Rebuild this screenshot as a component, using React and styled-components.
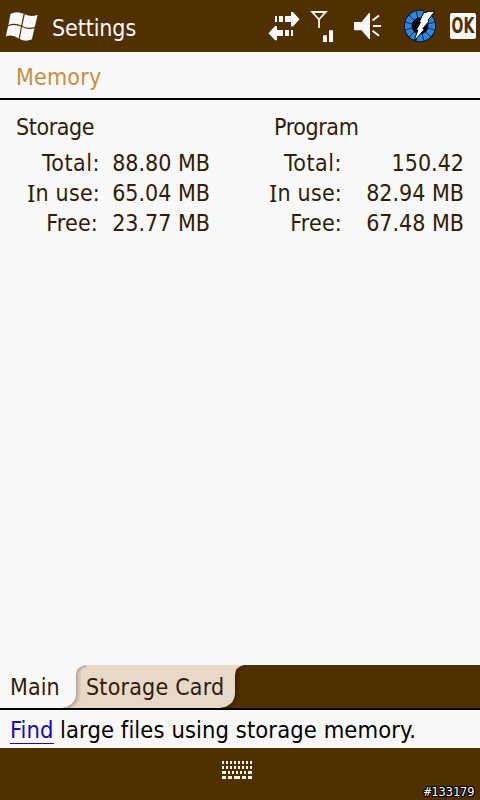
import React from "react";
import styled, { createGlobalStyle } from "styled-components";

const BROWN = "#503000";
const PAPER = "#f8f8f8";
const INK = "#301c08";

const GlobalStyle = createGlobalStyle`
  * { box-sizing: border-box; }
  body { margin: 0; background: ${PAPER}; }
`;

const Screen = styled.div`
  width: 480px;
  height: 800px;
  display: flex;
  flex-direction: column;
  overflow: hidden;
  background: ${PAPER};
  color: ${INK};
  font: 23px/30px "DejaVu Sans Condensed", "DejaVu Sans", sans-serif;
  font-stretch: condensed;
  white-space: pre;
`;

const TopBar = styled.header`
  height: 52px;
  flex: none;
  display: flex;
  align-items: flex-start;
  background: ${BROWN};
  color: ${PAPER};
`;

const BarTitle = styled.h1`
  margin: 13px 0 0 11px;
  width: 216px;
  font-size: 23px;
  font-weight: 400;
  letter-spacing: -0.1px;
`;

const Icon = styled.svg`
  flex: none;
  display: block;
`;

const OkButton = styled.button`
  width: 26px;
  height: 26px;
  flex: none;
  margin: 13px 0 0;
  padding: 0;
  display: flex;
  justify-content: center;
  border: 0;
  border-radius: 2px;
  background: ${PAPER};
  color: ${BROWN};
  font: 700 20.5px/27px "DejaVu Sans Condensed", "DejaVu Sans", sans-serif;
  font-stretch: condensed;
`;

const OkText = styled.span`
  flex: none;
  transform: scaleX(0.76);
`;

const PageTitle = styled.h2`
  height: 48px;
  flex: none;
  margin: 0;
  padding: 10px 0 0 16px;
  border-bottom: 2px solid #000;
  color: #c68e40;
  font-size: 23px;
  font-weight: 400;
  letter-spacing: 0.2px;
`;

const Content = styled.main`
  flex: 1;
  display: flex;
  padding-top: 12px;
`;

const Column = styled.section`
  width: ${(p) => p.$width}px;
`;

const GroupName = styled.h3`
  margin: 0 0 6px;
  padding-left: 16px;
  font-size: 23px;
  font-weight: 400;
  letter-spacing: -0.4px;
`;

const Row = styled.div`
  height: 30px;
  display: flex;
`;

const Label = styled.span`
  width: ${(p) => p.$width}px;
  padding-right: ${(p) => p.$inset || 0}px;
  display: flex;
  justify-content: flex-end;
  letter-spacing: ${(p) => p.$spacing || 0.2}px;
`;

const SerifI = styled.span`
  font-family: "Noto Sans", sans-serif;
  font-size: 23.5px;
`;

const Value = styled.span`
  width: ${(p) => p.$width}px;
  text-align: right;
`;

const TabBar = styled.nav`
  height: 45px;
  flex: none;
  display: flex;
  background: ${BROWN};
  border-bottom: 2px solid #000;
`;

const Tab = styled.span`
  width: ${(p) => p.$width}px;
  padding: 7px 0 0 ${(p) => p.$left}px;
  background: ${(p) => (p.$active ? PAPER : "#e8d8c8")};
  letter-spacing: ${(p) => p.$spacing}px;
`;

/* The label is wider than the flat part of its tab and runs over the edge. */
const TabLabel = styled.span`
  display: block;
  margin-left: -1px;
  position: relative;
`;

const Hint = styled.p`
  height: 38px;
  flex: none;
  margin: 0;
  padding: 5px 0 0 10px;
  display: flex;
  background: ${PAPER};
  color: #000;
  font-size: 23.5px;
  letter-spacing: 0.1px;
`;

const FindLink = styled.a`
  width: 44px;
  height: 29px;
  margin-right: 6px;
  border-bottom: 1px solid #1808b8;
  color: #1808b8;
`;

const BottomBar = styled.footer`
  height: 52px;
  flex: none;
  display: flex;
  background: ${BROWN};
`;

const Keyboard = styled(Icon)`
  margin: 13px 172px 0 222px;
`;

const Stamp = styled.span`
  align-self: flex-end;
  height: 15px;
  color: #fff;
  font: 12px/14px "DejaVu Sans Mono", monospace;
  text-shadow: 1px 0 #000, -1px 0 #000, 0 1px #000, 0 -1px #000, 1px 1px #000, -1px -1px #000, 1px -1px #000, -1px 1px #000;
`;

const WindowsLogo = () => (
  <Icon width="41" height="52" viewBox="0 0 41 52" fill={PAPER}>
    <path d="M10.5 14Q16 10.5 23.6 13.7L21.2 25.3Q14.5 22.2 8.4 25Z" />
    <path d="M24.8 14.2Q31 17.5 37.6 14.8L34.8 27Q28 29 22.3 25.9Z" />
    <path d="M8.1 26.2Q14.5 23.6 21 26.6L18.7 38.5Q12 33.5 5.8 36.5Z" />
    <path d="M22 27.1Q28 30.2 34.5 28.3L31.8 39.5Q25 42 19.8 39Z" />
  </Icon>
);

const ConnectionIcon = () => (
  <Icon width="42" height="52" viewBox="268 0 42 52" fill={PAPER}>
    <path d="M275 16h2v6h-2zM279 16h4v6h-4zM285 16h6v-4h2l6.5 7.3-6.5 7.2h-2V22h-6z" />
    <path d="M291 30h2v6h-2zM285 30h4v6h-4zM283 30h-6v-4h-2l-6.5 7.2 6.5 7.1h2V36h6z" />
  </Icon>
);

const SignalIcon = () => (
  <Icon width="43" height="52" viewBox="310 0 43 52" fill={PAPER}>
    <path d="M312.2 12h13.6L319 19.5zM319 18v10" fill="none" stroke={PAPER} strokeWidth="1.8" />
    <path d="M323 36l1-1h2l1 1v6h-4zM329 31l1-1h2l1 1v11h-4z" />
  </Icon>
);

const SpeakerIcon = () => (
  <Icon width="50" height="52" viewBox="353 0 50 52" fill={PAPER}>
    <path d="M354 22h7.5l7.5-9h1v26h-1l-7.5-8.7H354z" />
    <path d="M372.5 20.5l6.5-5M373 26h8M372.5 30.8l6.5 5" fill="none" stroke={PAPER} strokeWidth="2" />
  </Icon>
);

const SEGMENTS = Array.from({ length: 12 }, (_, i) => i * 30);

const PowerIcon = () => (
  <Icon width="47" height="52" viewBox="403 0 47 52">
    <circle cx="420" cy="26" r="16" fill="#05080c" />
    <circle cx="420" cy="26" r="11.8" fill="none" stroke="#2f84dc" strokeWidth="6.8" />
    {SEGMENTS.map((a) => (
      <path key={a} d="M420 18V10" stroke="#0c2c58" strokeWidth="0.9" transform={`rotate(${a + 15} 420 26)`} />
    ))}
    <path d="M423.5 13Q428 10.8 434.8 11.3L428 20.3 429.2 21 422.8 28.5 424.2 29.5 414 41.3 417.8 30.2 416.6 29.2 420.4 22.4 419.6 21.2Z" fill="#fff" stroke="#05080c" strokeWidth="1" />
  </Icon>
);

const TabEdge = ({ left, right, shade }) => (
  <Icon width="26" height="43" viewBox="0 0 26 43">
    <rect width="26" height="43" fill={right} />
    <path d="M25 0Q17 2 17 10V29Q17 41 2 43" fill="none" stroke={shade} strokeWidth="5" opacity="0.3" />
    <path d="M25 0Q16 2 16 10V29Q16 41 2 43" fill="none" stroke={shade} strokeWidth="2" opacity="0.55" />
    <path d="M0 0H24Q15 2 15 10V29Q14 41 0 43Z" fill={left} />
  </Icon>
);

const KEYS = [
  [0, [0, 4, 8, 12, 16, 20, 24, 28].map((x) => [x, 2])],
  [5, [0, 4, 8, 12, 16, 20, 24, 28].map((x) => [x, 2])],
  [10, [[0, 4], [6, 2], [10, 2], [14, 2], [18, 2], [22, 2], [26, 4]]],
  [15, [[0, 4], [6, 4], [12, 6], [20, 4], [26, 4]]],
];

const KeyboardIcon = () => (
  <Keyboard width="30" height="20" viewBox="0 0 30 20" fill="#fffbe8">
    {KEYS.map(([y, keys]) =>
      keys.map(([x, w]) => <rect key={`${x}-${y}`} x={x} y={y} width={w} height="3" />)
    )}
  </Keyboard>
);

const InUse = () => (
  <>
    <SerifI>I</SerifI>n use:
  </>
);

export default function App() {
  return (
    <>
      <GlobalStyle />
      <Screen>
        <TopBar>
          <WindowsLogo />
          <BarTitle>Settings</BarTitle>
          <ConnectionIcon />
          <SignalIcon />
          <SpeakerIcon />
          <PowerIcon />
          <OkButton><OkText>OK</OkText></OkButton>
        </TopBar>
        <PageTitle>Memory</PageTitle>
        <Content>
          <Column $width={258}>
            <GroupName>Storage</GroupName>
            <Row><Label $width={100} $spacing={0.5}>Total:</Label><Value $width={110}>88.80 MB</Value></Row>
            <Row><Label $width={100}><InUse /></Label><Value $width={110}>65.04 MB</Value></Row>
            <Row><Label $width={100} $inset={2}>Free:</Label><Value $width={110}>23.77 MB</Value></Row>
          </Column>
          <Column $width={222}>
            <GroupName>Program</GroupName>
            <Row><Label $width={84} $spacing={0.5}>Total:</Label><Value $width={122}>150.42</Value></Row>
            <Row><Label $width={84}><InUse /></Label><Value $width={122}>82.94 MB</Value></Row>
            <Row><Label $width={84}>Free:</Label><Value $width={122}>67.48 MB</Value></Row>
          </Column>
        </Content>
        <TabBar>
          <Tab $active $width={61} $left={10} $spacing={0.1}>Main</Tab>
          <TabEdge left={PAPER} right="#e8d8c8" shade="#a89888" />
          <Tab $width={133} $left={0} $spacing={0.2}>
            <TabLabel>Storage Card</TabLabel>
          </Tab>
          <TabEdge left="#e8d8c8" right={BROWN} shade="#382000" />
        </TabBar>
        <Hint>
          <FindLink>Find</FindLink>
          <span>large files using storage memory.</span>
        </Hint>
        <BottomBar>
          <KeyboardIcon />
          <Stamp>#133179</Stamp>
        </BottomBar>
      </Screen>
    </>
  );
}
